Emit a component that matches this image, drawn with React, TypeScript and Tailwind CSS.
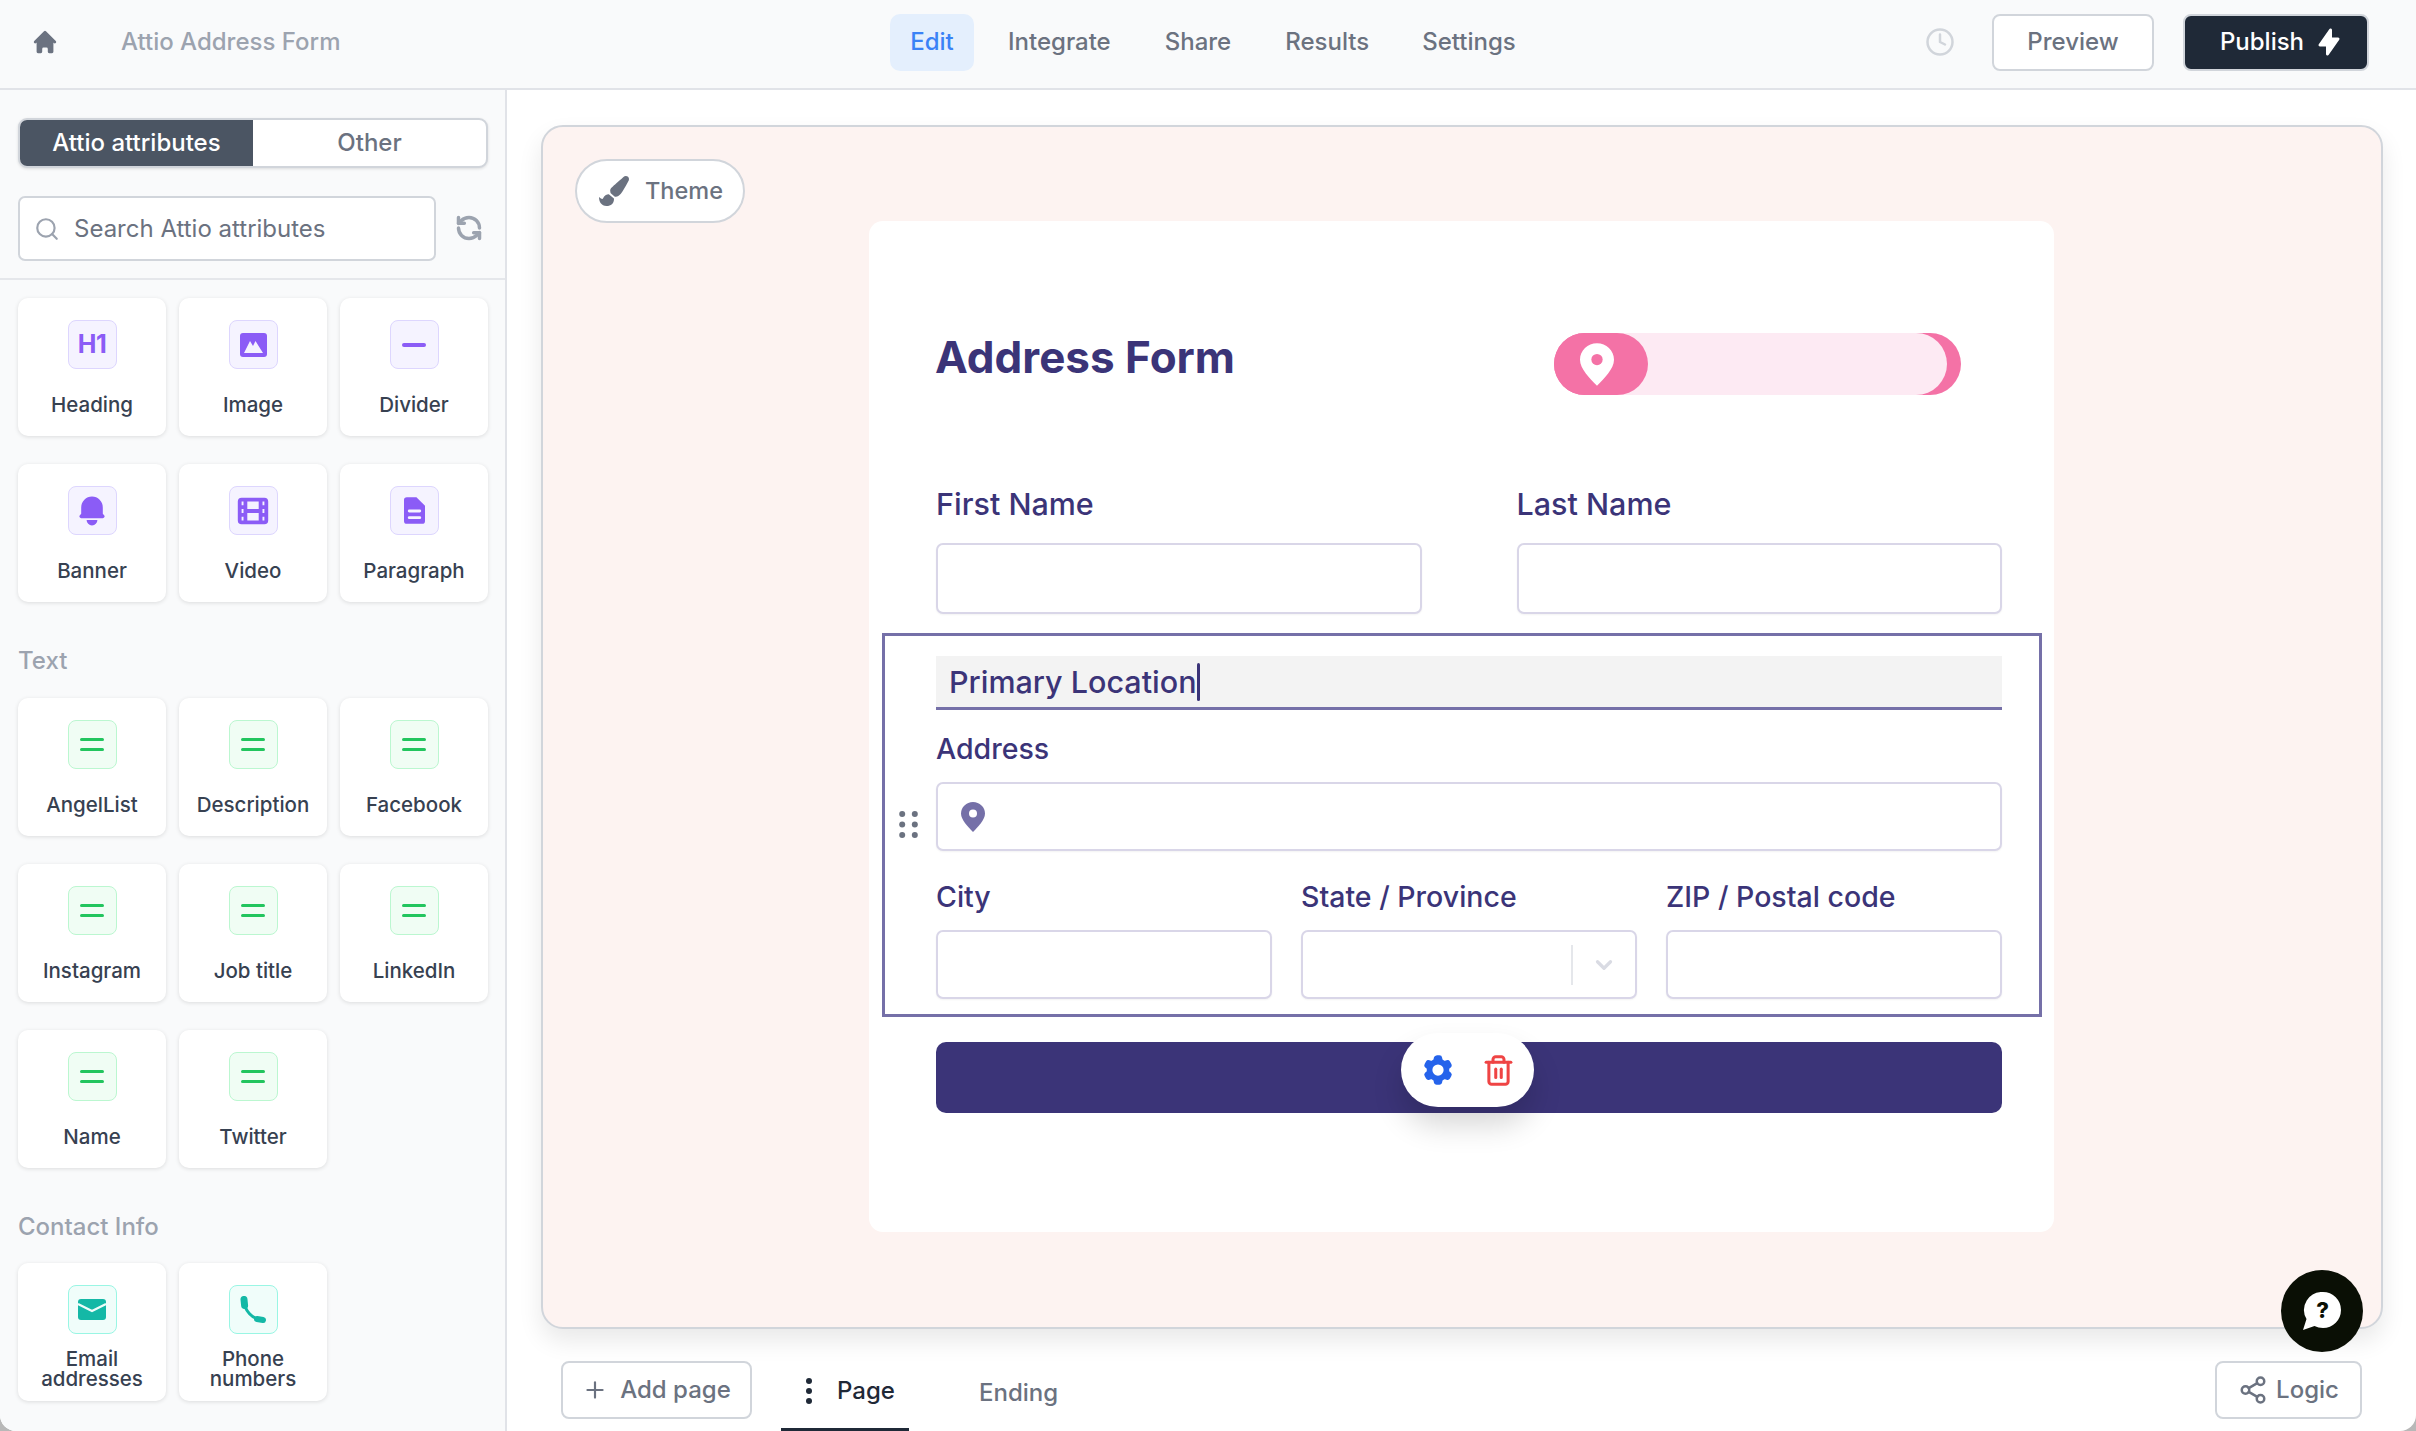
import { ChevronDown, Clock, Plus, RefreshCcw, Search, Share2, Trash2 } from "lucide-react";
import { FaPaintBrush } from "react-icons/fa";
import { HiBell, HiFilm, HiHome, HiLightningBolt } from "react-icons/hi";
import { HiCog6Tooth } from "react-icons/hi2";
import type { ReactNode } from "react";

const ImageIcon = () => (
  <svg viewBox="0 0 27 24" className="w-[27px] h-[24px]">
    <rect width="27" height="24" rx="3" fill="#8b5cf6" />
    <path d="M4 20l6-12 3 5 2.500-5L23 20z" fill="#f5f3ff" />
  </svg>
);

const DividerIcon = () => <div className="w-[24px] h-[4px] rounded-full bg-[#8b5cf6]" />;

const DocIcon = () => (
  <svg viewBox="0 0 22 28" className="w-[21px] h-[27px]">
    <path d="M3 0h10l9 9v16a3 3 0 0 1-3 3H3a3 3 0 0 1-3-3V3a3 3 0 0 1 3-3z" fill="#8b5cf6" />
    <rect x="4" y="13" width="14" height="3" rx="1.500" fill="#f5f3ff" />
    <rect x="4" y="20" width="14" height="3" rx="1.500" fill="#f5f3ff" />
  </svg>
);

const LinesIcon = () => (
  <div className="flex flex-col gap-[7px]">
    <div className="w-[24px] h-[3px] rounded-full bg-[#22c55e]" />
    <div className="w-[24px] h-[3px] rounded-full bg-[#22c55e]" />
  </div>
);

const MailIcon = () => (
  <svg viewBox="0 0 28 21" className="w-[28px] h-[21px]">
    <rect width="28" height="21" rx="3" fill="#14b8a6" />
    <path d="M0 5l14 7 14-7" fill="none" stroke="#f0fdfa" strokeWidth="2.200" />
  </svg>
);

const PhoneIcon = () => (
  <svg viewBox="0 0 28 28" className="w-[28px] h-[28px]">
    <path d="M5 4c0 10 8 20 20 20" fill="none" stroke="#14b8a6" strokeWidth="3" />
    <path d="M5 3.500l.6 6" fill="none" stroke="#14b8a6" strokeWidth="7" strokeLinecap="round" />
    <path d="M18 23l6 1" fill="none" stroke="#14b8a6" strokeWidth="6" strokeLinecap="round" />
  </svg>
);

const PinIcon = ({ color, hole, className }: { color: string; hole: string; className: string }) => (
  <svg viewBox="0 0 24 30" className={className}>
    <path d="M12 0C5.400 0 0 5.200 0 11.600 0 18 7 25 12 30c5-5 12-12 12-18.400C24 5.200 18.600 0 12 0z" fill={color} />
    <circle cx="12" cy="11.500" r="4" fill={hole} />
  </svg>
);

const DotsHandle = () => (
  <svg viewBox="0 0 19 27" className="w-[19px] h-[27px]">
    {[3, 13.500, 24].map((cy) => (
      <g key={cy} fill="#6b7280">
        <circle cx="3.200" cy={cy} r="3" />
        <circle cx="15.800" cy={cy} r="3" />
      </g>
    ))}
  </svg>
);

const HelpIcon = () => (
  <svg viewBox="0 0 38 38" className="w-[38px] h-[38px]">
    <path d="M20 0a18 18 0 0 1 0 36c-3 0-6-.7-8.500-2L0 38l3.500-11A18 18 0 0 1 20 0z" fill="#fff" />
    <text x="19.500" y="26" textAnchor="middle" fontSize="22" fontWeight="800" fontFamily="Inter, sans-serif" fill="#0a0f05">?</text>
  </svg>
);

type Tile = { label: ReactNode; icon: ReactNode; tone: "purple" | "green" | "teal"; tall?: boolean };

const toneClass = {
  purple: "bg-[#f5f3ff] border-[#ddd6fe]",
  green: "bg-[#f0fdf4] border-[#bbf7d0]",
  teal: "bg-[#f0fdfa] border-[#99f6e4]",
};

const layoutTiles: Tile[] = [
  { label: "Heading", tone: "purple", icon: <span className="text-[25px] font-bold text-[#8b5cf6] tracking-[-0.5px]">H1</span> },
  { label: "Image", tone: "purple", icon: <ImageIcon /> },
  { label: "Divider", tone: "purple", icon: <DividerIcon /> },
  { label: "Banner", tone: "purple", icon: <HiBell className="w-[36px] h-[36px] text-[#8b5cf6]" /> },
  { label: "Video", tone: "purple", icon: <HiFilm className="w-[38px] h-[38px] text-[#8b5cf6]" /> },
  { label: "Paragraph", tone: "purple", icon: <DocIcon /> },
];

const textTiles: Tile[] = ["AngelList", "Description", "Facebook", "Instagram", "Job title", "LinkedIn", "Name", "Twitter"].map((label) => ({
  label,
  tone: "green",
  icon: <LinesIcon />,
}));

const contactTiles: Tile[] = [
  { label: <>Email<br />addresses</>, tone: "teal", tall: true, icon: <MailIcon /> },
  { label: <>Phone<br />numbers</>, tone: "teal", tall: true, icon: <PhoneIcon /> },
];

const TileCard = ({ tile }: { tile: Tile }) => (
  <div className="h-[138px] bg-white rounded-[10px] shadow-[0_1px_4px_rgba(0,0,0,0.12)] flex flex-col items-center pt-[22px]">
    <div className={`w-[49px] h-[49px] rounded-[8px] border flex items-center justify-center ${toneClass[tile.tone]}`}>{tile.icon}</div>
    {tile.tall ? (
      <div className="mt-[15px] text-[20.500px] leading-[20px] font-medium text-[#374151] text-center">{tile.label}</div>
    ) : (
      <div className="mt-[24px] text-[20.500px] leading-[24px] font-medium text-[#374151] text-center">{tile.label}</div>
    )}
  </div>
);

const TileGrid = ({ tiles }: { tiles: Tile[] }) => (
  <div className="grid grid-cols-3 gap-x-[13px] gap-y-[28px]">
    {tiles.map((tile, i) => (
      <TileCard key={i} tile={tile} />
    ))}
  </div>
);

const Field = ({ label, children }: { label: string; children?: ReactNode }) => (
  <div>
    <div className="text-[28.500px] leading-[34px] font-[450] text-[#3b3478]">{label}</div>
    <div className="mt-[16px] h-[69px] bg-white border-2 border-[#d9d6e8] rounded-[7px] shadow-[0_1px_2px_rgba(0,0,0,0.05)] flex items-center">{children}</div>
  </div>
);

const TopField = ({ label }: { label: string }) => (
  <div>
    <div className="text-[30.500px] leading-[34px] text-[#3b3478] font-medium">{label}</div>
    <div className="mt-[22px] h-[71px] bg-white border-2 border-[#d9d6e8] rounded-[7px] shadow-[0_1px_2px_rgba(0,0,0,0.05)]" />
  </div>
);

const App = () => {
  return (
    <div className="w-[2416px] h-[1431px] bg-[#b8b8b8]" style={{ fontFamily: "Inter, sans-serif" }}>
      <div className="relative w-full h-full bg-white rounded-b-[16px] overflow-hidden flex flex-col">
        <header className="h-[90px] shrink-0 bg-[#f9fafb] border-b-2 border-[#e1e3e8] flex items-center pb-[4px]">
          <HiHome className="ml-[31px] w-[28px] h-[28px] text-[#6b7280]" />
          <div className="ml-[62px] w-[340px] text-[24px] text-[#9ca3af] font-medium">Attio Address Form</div>
          <nav className="ml-[429px] flex items-center text-[24px] font-medium text-[#6b7280]">
            <div className="w-[84px] h-[57px] rounded-[10px] bg-[#e4effd] text-[#3b82f6] flex items-center justify-center">Edit</div>
            <div className="ml-[34px]">Integrate</div>
            <div className="ml-[54px]">Share</div>
            <div className="ml-[54px]">Results</div>
            <div className="ml-[53px]">Settings</div>
          </nav>
          <div className="ml-auto flex items-center">
            <Clock className="w-[30px] h-[30px] text-[#d1d5db]" />
            <div className="ml-[37px] w-[162px] h-[57px] bg-white border-2 border-[#d1d5db] rounded-[8px] flex items-center justify-center text-[24px] font-medium text-[#6b7280]">Preview</div>
            <div className="ml-[29px] mr-[47px] w-[186px] h-[57px] pl-[12px] bg-[#1f2937] border-2 border-[#d1d5db] rounded-[8px] flex items-center justify-center gap-[10px] text-[24px] font-medium text-white">
              Publish
              <HiLightningBolt className="w-[30px] h-[30px]" />
            </div>
          </div>
        </header>

        <div className="flex flex-1 min-h-0">
          <aside className="w-[507px] shrink-0 bg-[#f9fafb] border-r-2 border-[#e1e3e8]">
            <div className="px-[18px] pt-[28px] pb-[17px] border-b-2 border-[#e5e7eb]">
              <div className="w-[470px] h-[50px] rounded-[9px] border-2 border-[#d1d5db] bg-white flex overflow-hidden shadow-[0_1px_3px_rgba(0,0,0,0.12)] text-[24px] font-medium">
                <div className="w-[233px] bg-[#4b5563] text-white flex items-center justify-center">Attio attributes</div>
                <div className="flex-1 text-[#6b7280] flex items-center justify-center">Other</div>
              </div>
              <div className="mt-[28px] flex items-center">
                <div className="w-[418px] h-[65px] bg-white border-2 border-[#d1d5db] rounded-[7px] flex items-center pl-[14px] gap-[14px] text-[24px] text-[#6b7280]">
                  <Search className="w-[26px] h-[26px] text-[#9ca3af]" />
                  Search Attio attributes
                </div>
                <RefreshCcw className="ml-[19px] w-[28px] h-[28px] text-[#9ca3af] -mt-[2px]" strokeWidth={3} />
              </div>
            </div>
            <div className="pl-[18px] pr-[17px] pt-[18px]">
              <TileGrid tiles={layoutTiles} />
              <div className="mt-[43px] text-[24px] leading-[32px] font-medium text-[#9ca3af]">Text</div>
              <div className="mt-[21px]">
                <TileGrid tiles={textTiles} />
              </div>
              <div className="mt-[43px] text-[24px] leading-[32px] font-medium text-[#9ca3af]">Contact Info</div>
              <div className="mt-[20px]">
                <TileGrid tiles={contactTiles} />
              </div>
            </div>
          </aside>

          <main className="flex-1 min-w-0">
            <div className="relative ml-[34px] mt-[35px] w-[1842px] h-[1204px] bg-[#fdf3f1] border-2 border-[#d1d5db] rounded-[22px] shadow-[0_12px_24px_rgba(0,0,0,0.09)] pl-[326px] pt-[94px]">
              <div className="absolute left-[32px] top-[32px] w-[170px] h-[64px] rounded-full bg-white border-2 border-[#d1d5db] flex items-center pl-[22px] gap-[16px] text-[23.500px] font-medium text-[#6b7280]">
                <FaPaintBrush className="w-[30px] h-[30px]" />
                Theme
              </div>
              <div className="relative w-[1185px] h-[1011px] bg-white rounded-[14px] pl-[67px] pr-[52px] pt-[112px]">
                <div className="flex items-start">
                  <div className="-ml-[1px] text-[44px] leading-[48px] font-bold text-[#3b3478]">Address Form</div>
                  <div className="ml-auto mr-[41px] relative w-[407px] h-[62px] rounded-full bg-[#f472a6]">
                    <div className="absolute left-[60px] top-0 w-[333px] h-[62px] rounded-r-full bg-[#fdeaf3]" />
                    <div className="absolute left-0 top-0 w-[94px] h-[62px] pr-[8px] rounded-full bg-[#f472a6] flex items-center justify-center">
                      <PinIcon color="#fff" hole="#f472a6" className="w-[34px] h-[47px]" />
                    </div>
                  </div>
                </div>

                <div className="mt-[92px] grid grid-cols-2 gap-[95px]">
                  <TopField label="First Name" />
                  <TopField label="Last Name" />
                </div>

                <div className="relative mt-[19px] -ml-[54px] -mr-[40px] h-[384px] border-[3px] border-[#7570a8] pl-[51px] pr-[37px] pt-[20px]">
                  <div className="h-[54px] bg-[#f3f3f3] border-b-[3px] border-[#7570a8] flex items-center pl-[13px] text-[30.500px] text-[#3b3478] font-medium">
                    Primary Location
                    <span className="w-[3px] h-[38px] bg-[#3b3478] rounded-full" />
                  </div>
                  <div className="mt-[22px]">
                    <Field label="Address">
                      <PinIcon color="#7570a8" hole="#fff" className="ml-[23px] w-[24px] h-[30px]" />
                    </Field>
                  </div>
                  <div className="mt-[29px] grid grid-cols-3 gap-[29px]">
                    <Field label="City" />
                    <Field label="State / Province">
                      <div className="ml-auto w-[2px] h-[40px] bg-[#e5e7eb]" />
                      <ChevronDown className="mx-[18px] w-[26px] h-[26px] text-[#d9dbe3]" strokeWidth={3} />
                    </Field>
                    <Field label="ZIP / Postal code" />
                  </div>
                  <div className="absolute left-[14px] top-[175px]">
                    <DotsHandle />
                  </div>
                </div>

                <div className="mt-[25px] h-[71px] rounded-[10px] bg-[#3b3478]" />

                <div className="absolute left-[532px] top-[812px] w-[133px] h-[74px] rounded-full bg-white shadow-[0_18px_30px_rgba(0,0,0,0.16)] flex items-center justify-center gap-[26px]">
                  <HiCog6Tooth className="w-[36px] h-[36px] text-[#2563eb]" />
                  <Trash2 className="w-[33px] h-[33px] text-[#ef4444]" strokeWidth={2.200} />
                </div>
              </div>
            </div>

            <div className="mt-[32px] flex items-start pl-[54px] pr-[54px]">
              <div className="w-[191px] h-[58px] bg-white border-2 border-[#d1d5db] rounded-[8px] flex items-center justify-center gap-[12px] text-[24px] font-medium text-[#6b7280]">
                <Plus className="w-[26px] h-[26px]" />
                Add page
              </div>
              <div className="ml-[29px] w-[128px] h-[70px] border-b-[3px] border-[#1f2937] flex items-center pl-[25px] gap-[25px] pb-[7px] text-[24px] font-medium text-[#1f2937]">
                <svg viewBox="0 0 6 26" className="w-[6px] h-[26px]">
                  <circle cx="3" cy="3" r="3" fill="#1f2937" />
                  <circle cx="3" cy="13" r="3" fill="#1f2937" />
                  <circle cx="3" cy="23" r="3" fill="#1f2937" />
                </svg>
                Page
              </div>
              <div className="ml-[70px] h-[63px] flex items-center text-[24px] font-medium text-[#6b7280]">Ending</div>
              <div className="ml-auto w-[147px] h-[58px] bg-white border-2 border-[#d1d5db] rounded-[8px] flex items-center justify-center gap-[8px] text-[24px] font-medium text-[#6b7280]">
                <Share2 className="w-[30px] h-[30px]" />
                Logic
              </div>
            </div>
          </main>
        </div>

        <div className="absolute right-[53px] top-[1270px] w-[82px] h-[82px] rounded-full bg-[#0a0f05] flex items-center justify-center">
          <HelpIcon />
        </div>
      </div>
    </div>
  );
};

export default App;
